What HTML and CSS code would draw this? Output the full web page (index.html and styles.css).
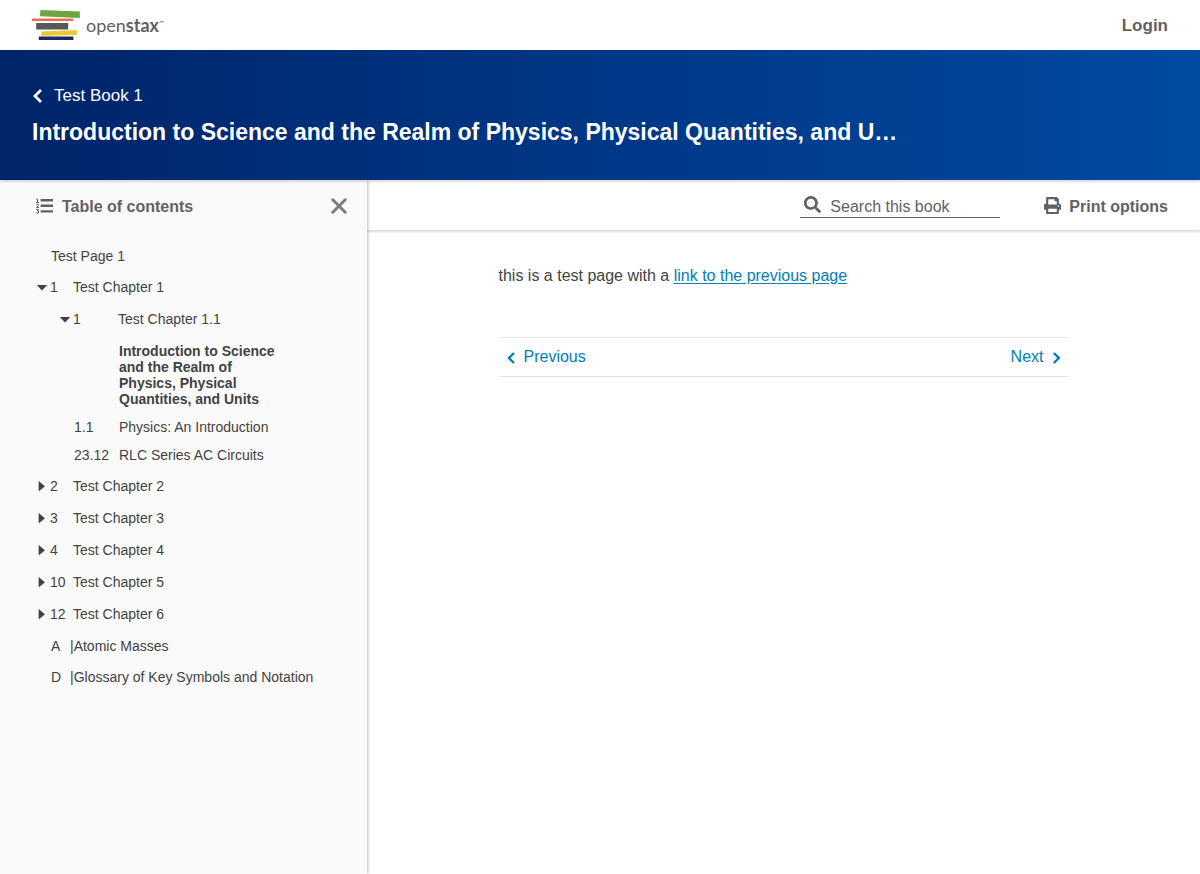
FILE: index.html
```html
<!DOCTYPE html>
<html lang="en">
<head>
<meta charset="utf-8">
<meta name="viewport" content="width=device-width, initial-scale=1">
<title>Test Book 1</title>
<link rel="stylesheet" href="styles.css">
</head>
<body>
<header class="topbar">
  <a class="logo" href="#" aria-label="OpenStax home">
    <svg class="logo-mark" width="48" height="32" viewBox="0 0 48 32" aria-hidden="true">
      <path fill="#6fa443" d="M8.400 1 47.800 2.600V9L8 7.200z"/>
      <path fill="#e7704a" d="M0 9.600h41.200v2.400H0z"/>
      <path fill="#575a58" d="M4.200 14h32v6.400h-32z"/>
      <path fill="#edc93a" d="M9.400 22.400 45 21v4.800L9.400 27z"/>
      <path fill="#1d2a5b" d="M6.800 27.400h34.600v3.600H6.800z"/>
    </svg>
    <span class="logo-text">open<b>stax</b><span class="logo-tm">™</span></span>
  </a>
  <a class="login" href="#">Login</a>
</header>

<div class="banner">
  <a class="book-link" href="#">
    <svg width="10" height="14" viewBox="0 0 10 14" aria-hidden="true"><path d="M9 1 3 7l6 6" fill="none" stroke="currentColor" stroke-width="2.800"/></svg>
    Test Book 1
  </a>
  <h1 class="page-title">Introduction to Science and the Realm of Physics, Physical Quantities, and U…</h1>
</div>

<div class="layout">
  <nav class="sidebar" aria-label="Table of contents">
    <div class="sidebar-head">
      <svg width="18" height="16" viewBox="0 0 18 16" aria-hidden="true">
        <path fill="currentColor" d="M4.600 1H17v2.400H4.600zM4.600 6.600H17V9H4.600zM4.600 12.200H17v2.400H4.600z"/>
        <path fill="none" stroke="currentColor" d="M.3 1.200h1.200v3.300M0 4.500h3M.2 6.300h2.200v1.200L.5 9.500H3M.2 11.400h2.300L1.300 13h1.200v2H.1"/>
      </svg>
      <h2 class="sidebar-title">Table of contents</h2>
      <button class="close" type="button" aria-label="Close table of contents">
        <svg width="16" height="16" viewBox="0 0 16 16" aria-hidden="true"><path d="M1.800 1.800l12.400 12.400M14.200 1.800 1.800 14.200" fill="none" stroke="currentColor" stroke-width="3" stroke-linecap="round"/></svg>
      </button>
    </div>
    <ol class="toc">
      <li><a class="leaf" href="#">Test Page 1</a></li>
      <li>
        <details open>
          <summary class="chapter"><svg class="caret" viewBox="0 0 14 10" aria-hidden="true"><path d="M.8 3h10.400L6 8.600z"/></svg><span class="num">1</span><span>Test Chapter 1</span></summary>
          <ol class="sub">
            <li>
              <details open>
                <summary class="chapter"><svg class="caret" viewBox="0 0 14 10" aria-hidden="true"><path d="M.8 3h10.400L6 8.600z"/></svg><span class="num">1</span><span>Test Chapter 1.1</span></summary>
                <ol class="pages">
                  <li><a class="page current" href="#" aria-current="page"><span class="num"></span><span>Introduction to Science and the Realm of Physics, Physical Quantities, and Units</span></a></li>
                  <li><a class="page" href="#"><span class="num">1.1</span><span>Physics: An Introduction</span></a></li>
                  <li><a class="page" href="#"><span class="num">23.12</span><span>RLC Series AC Circuits</span></a></li>
                </ol>
              </details>
            </li>
          </ol>
        </details>
      </li>
      <li><details><summary class="chapter"><svg class="caret" viewBox="0 0 14 10" aria-hidden="true"><path d="M2.600 0v10.400l6.400-5.200z"/></svg><span class="num">2</span><span>Test Chapter 2</span></summary></details></li>
      <li><details><summary class="chapter"><svg class="caret" viewBox="0 0 14 10" aria-hidden="true"><path d="M2.600 0v10.400l6.400-5.200z"/></svg><span class="num">3</span><span>Test Chapter 3</span></summary></details></li>
      <li><details><summary class="chapter"><svg class="caret" viewBox="0 0 14 10" aria-hidden="true"><path d="M2.600 0v10.400l6.400-5.200z"/></svg><span class="num">4</span><span>Test Chapter 4</span></summary></details></li>
      <li><details><summary class="chapter"><svg class="caret" viewBox="0 0 14 10" aria-hidden="true"><path d="M2.600 0v10.400l6.400-5.200z"/></svg><span class="num">10</span><span>Test Chapter 5</span></summary></details></li>
      <li><details><summary class="chapter"><svg class="caret" viewBox="0 0 14 10" aria-hidden="true"><path d="M2.600 0v10.400l6.400-5.200z"/></svg><span class="num">12</span><span>Test Chapter 6</span></summary></details></li>
      <li><a class="leaf" href="#"><span class="letter">A</span><span>|</span><span>Atomic Masses</span></a></li>
      <li><a class="leaf" href="#"><span class="letter">D</span><span>|</span><span>Glossary of Key Symbols and Notation</span></a></li>
    </ol>
  </nav>

  <div class="reader">
    <div class="toolbar">
      <form class="search" role="search">
        <svg width="17" height="17" viewBox="0 0 512 512" aria-hidden="true"><path fill="currentColor" d="M505 442.700 405.300 343c-4.500-4.500-10.600-7-17-7H372c27.600-35.300 44-79.700 44-128C416 93.100 322.900 0 208 0S0 93.100 0 208s93.100 208 208 208c48.300 0 92.700-16.400 128-44v16.300c0 6.400 2.500 12.500 7 17l99.700 99.700c9.400 9.400 24.600 9.400 33.900 0l28.300-28.300c9.400-9.400 9.400-24.600.1-34zM208 336c-70.700 0-128-57.200-128-128 0-70.700 57.200-128 128-128 70.700 0 128 57.200 128 128 0 70.700-57.200 128-128 128z"/></svg>
        <input class="search-input" type="text" placeholder="Search this book" aria-label="Search this book">
      </form>
      <button class="print" type="button">
        <svg width="17" height="17" viewBox="0 0 512 512" aria-hidden="true"><path fill="currentColor" d="M448 192V77.250c0-8.490-3.370-16.620-9.370-22.630L393.370 9.370c-6-6-14.140-9.370-22.630-9.370H96C78.330 0 64 14.330 64 32v160c-35.350 0-64 28.650-64 64v112c0 8.840 7.160 16 16 16h48v96c0 17.670 14.330 32 32 32h320c17.670 0 32-14.330 32-32v-96h48c8.840 0 16-7.160 16-16V256c0-35.350-28.650-64-64-64zm-64 256H128v-96h256v96zm0-224H128V64h192v48c0 8.840 7.160 16 16 16h48v96zm48 72c-13.250 0-24-10.750-24-24 0-13.260 10.750-24 24-24s24 10.740 24 24c0 13.250-10.750 24-24 24z"/></svg>
        <span class="print-label">Print options</span>
      </button>
    </div>
    <main class="content">
      <p class="text">this is a test page with a <a href="#">link to the previous page</a></p>
      <nav class="pager" aria-label="Pages">
        <a href="#"><svg width="9" height="14" viewBox="0 0 9 14" aria-hidden="true"><path d="m7 3-5 5 5 5" fill="none" stroke="currentColor" stroke-width="2.400"/></svg>Previous</a>
        <a href="#">Next<svg width="9" height="14" viewBox="0 0 9 14" aria-hidden="true"><path d="m1.800 3 5 5-5 5" fill="none" stroke="currentColor" stroke-width="2.400"/></svg></a>
      </nav>
    </main>
  </div>
</div>
</body>
</html>
```

FILE: styles.css
```css
* {
  box-sizing: border-box;
}

body {
  margin: 0;
  min-height: 100vh;
  display: flex;
  flex-direction: column;
  font-family: "Liberation Sans", Arial, sans-serif;
  font-size: 16px;
  color: #424242;
  background: #fff;
}

a {
  color: inherit;
  text-decoration: none;
}

button {
  border: 0;
  padding: 0;
  background: none;
  font: inherit;
  color: inherit;
  cursor: pointer;
}

ol {
  list-style: none;
  margin: 0;
  padding: 0;
}

svg {
  flex: none;
}

.topbar {
  height: 50px;
  padding: 0 32px;
  display: flex;
  align-items: center;
  justify-content: space-between;
}

.logo {
  display: flex;
  align-items: center;
  gap: 6px;
}

.logo-text {
  display: flex;
  font-family: Lato, sans-serif;
  font-size: 18px;
  line-height: 20px;
  color: #5f6163;
}

.logo-tm {
  font-size: 6px;
  line-height: 16px;
}

.login {
  font-size: 17px;
  font-weight: 700;
  line-height: 24px;
  padding-top: 2px;
  color: #5f6163;
}

.banner {
  position: relative;
  z-index: 2;
  padding: 32px;
  color: #fff;
  background: linear-gradient(to right, #002469, #004aa2);
  box-shadow: 0 2px 2px rgba(0, 0, 0, 0.14);
}

.book-link {
  display: flex;
  align-items: center;
  gap: 12px;
  font-size: 17px;
  line-height: 28px;
}

.page-title {
  margin: 6px 0 0;
  font-size: 23px;
  line-height: 32px;
}

.layout {
  flex: 1;
  display: flex;
}

.sidebar {
  position: relative;
  z-index: 1;
  flex: none;
  width: 367px;
  background: #fafafa;
  box-shadow: 1px 0 3px rgba(0, 0, 0, 0.25);
}

.sidebar-head {
  display: flex;
  align-items: center;
  gap: 8px;
  height: 52px;
  padding: 0 20px 0 36px;
  color: #5f6163;
}

.sidebar-title {
  flex: 1;
  margin: 0;
  padding-top: 2px;
  font-size: 16px;
  line-height: 20px;
}

.close {
  display: flex;
  color: #7c7c7c;
}

.toc {
  padding: 16px 20px 0 36px;
  font-size: 14px;
  line-height: 16px;
}

.leaf {
  display: flex;
  padding-left: 15px;
  margin-bottom: 15px;
}

.letter {
  width: 19px;
}

.chapter {
  display: flex;
  align-items: center;
  margin-bottom: 16px;
  list-style: none;
  cursor: pointer;
}

.caret {
  width: 14px;
  height: 10px;
  fill: currentColor;
  overflow: visible;
}

.num {
  flex: none;
  width: 23px;
}

.sub {
  padding-left: 23px;
}

.sub .num {
  width: 45px;
}

.pages {
  display: flex;
  flex-direction: column;
  gap: 12px;
  padding: 0 66px 15px 15px;
}

.page {
  display: flex;
}

.current {
  font-weight: 700;
}

.reader {
  flex: 1;
  min-width: 0;
}

.toolbar {
  display: flex;
  align-items: center;
  justify-content: flex-end;
  gap: 44px;
  height: 50px;
  padding: 0 32px;
  color: #5f6163;
  box-shadow: 0 2px 2px rgba(0, 0, 0, 0.14);
}

.search {
  display: flex;
  align-items: center;
  gap: 9px;
  width: 200px;
  height: 25px;
  padding-left: 4px;
  border-bottom: 1px solid #5f6163;
}

.search-input {
  flex: 1;
  min-width: 0;
  height: 24px;
  padding: 4px 0 0;
  border: 0;
  outline: 0;
  background: none;
  font: inherit;
  color: inherit;
}

.search-input::placeholder {
  color: #5f6163;
  opacity: 1;
}

.print {
  display: flex;
  align-items: center;
  gap: 8px;
  font-weight: 700;
  line-height: 20px;
}

.print-label {
  padding-top: 3px;
}

.content {
  max-width: 570px;
  margin: 0 auto;
  padding-top: 32px;
}

.text {
  margin: 0 0 48px;
  line-height: 27px;
}

.text a {
  color: #027eb5;
  text-decoration: underline;
  text-underline-offset: 2px;
}

.pager {
  display: flex;
  justify-content: space-between;
  padding: 8px;
  border-top: 1px solid #e5e5e5;
  border-bottom: 1px solid #e5e5e5;
  line-height: 22px;
  color: #027eb5;
}

.pager a {
  display: flex;
  align-items: center;
  gap: 8px;
}
```
